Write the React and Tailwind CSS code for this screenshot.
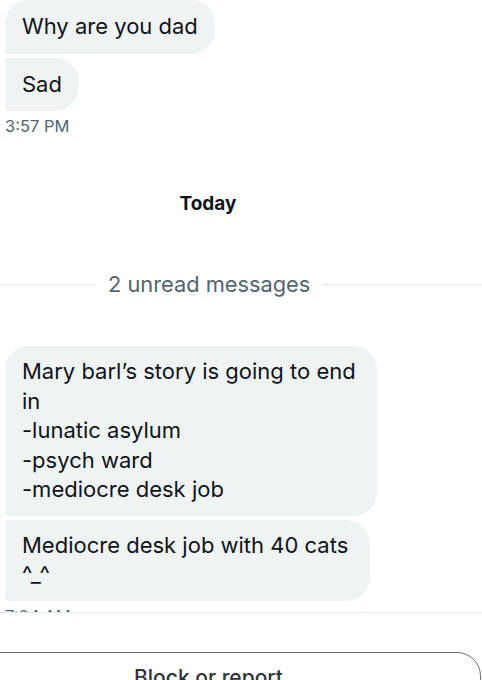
const received = [
  { text: "Why are you dad", shape: "rounded-tl-[24px] rounded-bl-[4px]" },
  { text: "Sad", shape: "rounded-tl-[4px] rounded-bl-[4px]" },
];

const unread = [
  {
    text: "Mary barl’s story is going to end\nin\n-lunatic asylum\n-psych ward\n-mediocre desk job",
    shape: "rounded-tl-[24px] rounded-bl-[4px] w-[372px]",
  },
  {
    text: "Mediocre desk job with 40 cats\n^_^",
    shape: "rounded-tl-[4px] rounded-bl-[4px] w-[365px]",
  },
];

const Bubble = ({ text, shape, wide }) => (
  <div
    className={`self-start ml-[5px] bg-[#eff3f4] text-[#0f1419] rounded-tr-[24px] rounded-br-[24px] ${shape} ${
      wide ? "px-[17px] py-[11px]" : "px-[17px] py-[12px]"
    } text-[22px] leading-[29.5px] whitespace-pre-line`}
  >
    {text}
  </div>
);

const App = () => {
  return (
    <div className="w-[482px] h-[680px] overflow-hidden bg-white font-['Inter','Liberation_Sans',sans-serif]">
      <div className="h-[612px] overflow-hidden flex flex-col">
        <div className="flex flex-col gap-[4px]">
          {received.map((m) => (
            <Bubble key={m.text} {...m} />
          ))}
        </div>
        <div className="ml-[5px] mt-[5px] text-[16.5px] leading-[20px] text-[#536471]">3:57 PM</div>

        <div className="w-[416px] mt-[56px] text-center text-[19px] font-bold text-[#0f1419] leading-[24px]">
          Today
        </div>

        <div className="flex items-center mt-[55px]">
          <div className="w-[95px] h-px bg-[#e1e8ed]" />
          <div className="px-[13px] text-[21.8px] leading-[26px] text-[#536471]">2 unread messages</div>
          <div className="flex-1 h-px bg-[#e1e8ed]" />
        </div>

        <div className="flex flex-col gap-[4px] mt-[49px]">
          {unread.map((m) => (
            <Bubble key={m.text} wide {...m} />
          ))}
        </div>
        <div className="ml-[5px] mt-[5px] text-[16.5px] leading-[20px] text-[#536471]">7:04 AM</div>
      </div>

      <div className="border-t border-[#e1e8ed] pt-[39px]">
        <div className="ml-[-64px] w-[545px] h-[80px] border border-[#6b6f74] rounded-[24px] flex justify-center pt-[12px]">
          <span className="text-[21px] font-medium text-[#2f3336] leading-[26px]">Block or report</span>
        </div>
      </div>
    </div>
  );
};

export default App;
